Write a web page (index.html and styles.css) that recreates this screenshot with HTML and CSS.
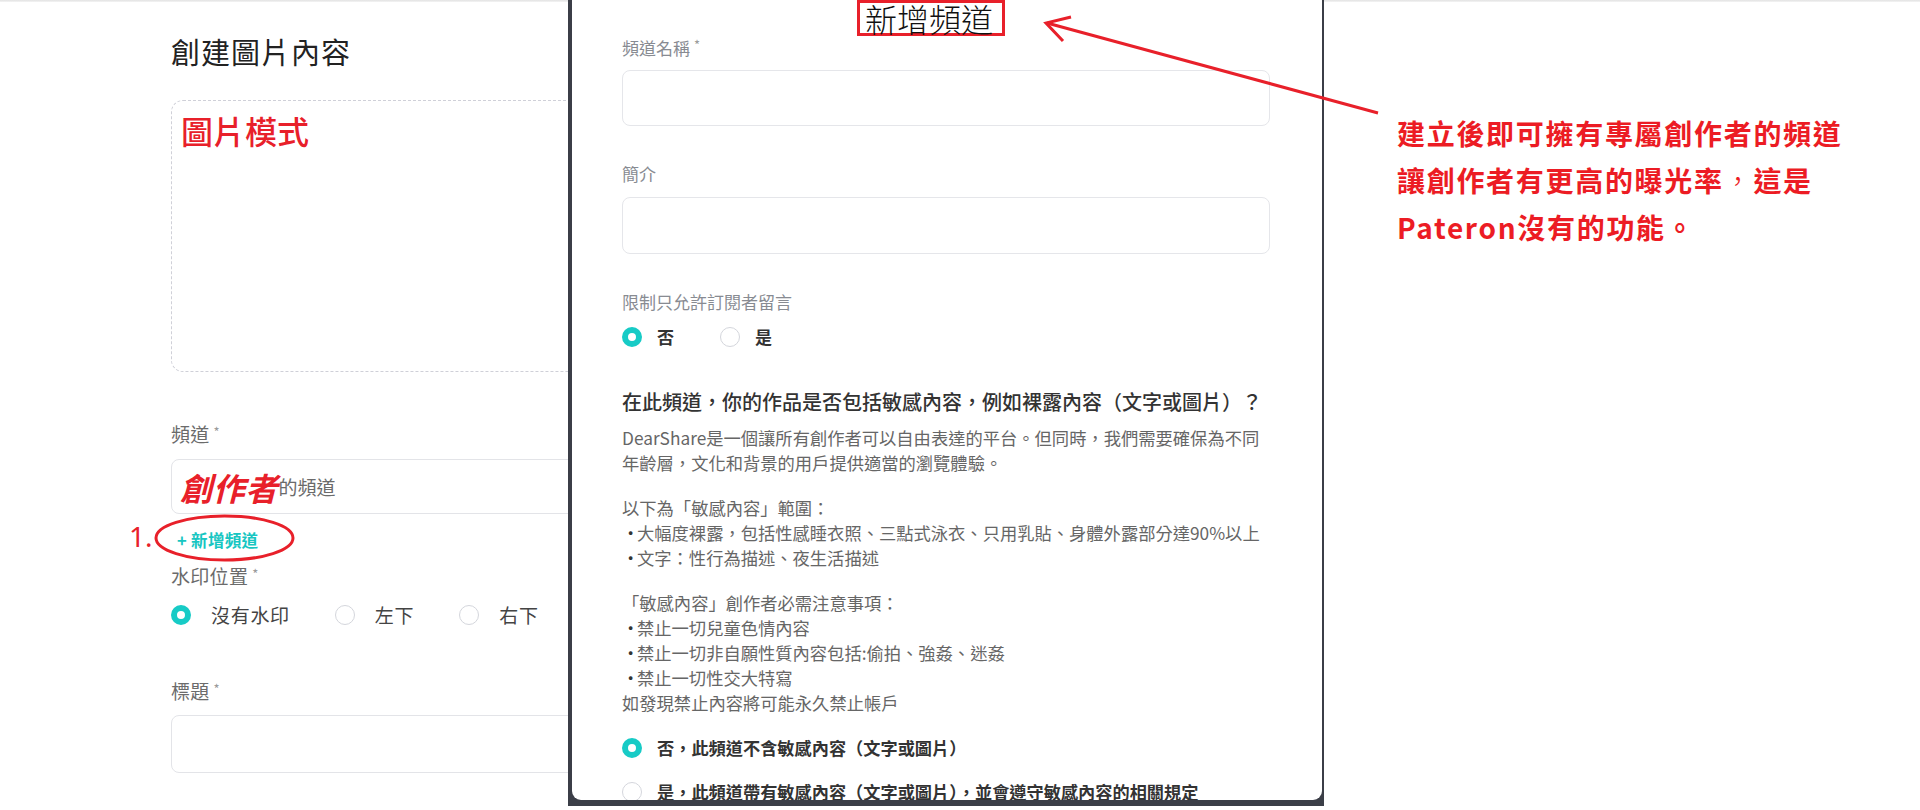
FILE: index.html
```html
<!DOCTYPE html>
<html lang="zh-Hant">
<head>
<meta charset="utf-8">
<title>創建圖片內容</title>
<link rel="stylesheet" href="styles.css">
</head>
<body>
<div class="topline"></div>

<main class="form">
  <h1 class="form-title">創建圖片內容</h1>
  <div class="upload"><span class="upload-note">圖片模式</span></div>

  <div class="label label-channel">頻道<span class="req">*</span></div>
  <div class="input input-channel"><span class="creator">創作者</span><span class="channel-suffix">的頻道</span></div>
  <a class="add-channel">+ 新增頻道</a>

  <div class="label label-watermark">水印位置<span class="req">*</span></div>
  <div class="radios radios-left">
    <label class="radio-item"><span class="radio on"></span><span class="radio-text">沒有水印</span></label>
    <label class="radio-item"><span class="radio"></span><span class="radio-text">左下</span></label>
    <label class="radio-item"><span class="radio"></span><span class="radio-text">右下</span></label>
  </div>

  <div class="label label-title">標題<span class="req">*</span></div>
  <div class="input input-title"></div>
</main>

<section class="modal">
  <div class="modal-body">
    <div class="modal-header"><span class="modal-title">新增頻道</span></div>

    <div class="m-label m-label-name">頻道名稱<span class="req">*</span></div>
    <div class="m-input"></div>

    <div class="m-label m-label-intro">簡介</div>
    <div class="m-input m-input-intro"></div>

    <div class="m-label m-label-limit">限制只允許訂閱者留言</div>
    <div class="radios radios-modal">
      <label class="radio-item"><span class="radio on"></span><span class="radio-text strong">否</span></label>
      <label class="radio-item"><span class="radio"></span><span class="radio-text strong">是</span></label>
    </div>

    <h2 class="m-heading">在此頻道，你的作品是否包括敏感內容，例如裸露內容（文字或圖片）？</h2>
    <p class="m-para">DearShare是一個讓所有創作者可以自由表達的平台。但同時，我們需要確保為不同<br>年齡層，文化和背景的用戶提供適當的瀏覽體驗。</p>
    <div class="m-block">
      <p>以下為「敏感內容」範圍：</p>
      <ul>
        <li>大幅度裸露，包括性感睡衣照、三點式泳衣、只用乳貼、身體外露部分達90%以上</li>
        <li>文字：性行為描述、夜生活描述</li>
      </ul>
    </div>
    <div class="m-block">
      <p>「敏感內容」創作者必需注意事項：</p>
      <ul>
        <li>禁止一切兒童色情內容</li>
        <li>禁止一切非自願性質內容包括:偷拍、強姦、迷姦</li>
        <li>禁止一切性交大特寫</li>
      </ul>
      <p>如發現禁止內容將可能永久禁止帳戶</p>
    </div>

    <div class="choice choice-first"><span class="radio on"></span><span class="choice-text">否，此頻道不含敏感內容（文字或圖片）</span></div>
    <div class="choice choice-second"><span class="radio"></span><span class="choice-text">是，此頻道帶有敏感內容（文字或圖片），並會遵守敏感內容的相關規定</span></div>
  </div>
</section>

<svg class="annotations" width="1920" height="810" viewBox="0 0 1920 810" aria-hidden="true">
  <ellipse cx="224.5" cy="538" rx="68.5" ry="22" fill="none" stroke="#e8202a" stroke-width="3"/>
  <line x1="1378" y1="113" x2="1047" y2="23" stroke="#e8202a" stroke-width="3"/>
  <polyline points="1071,17 1046,23 1063,41" fill="none" stroke="#e8202a" stroke-width="3"/>
</svg>

<div class="step-no">1.</div>

<div class="note">
  <p>建立後即可擁有專屬創作者的頻道</p>
  <p>讓創作者有更高的曝光率<span class="note-comma">，</span>這是</p>
  <p>Pateron沒有的功能。</p>
</div>
</body>
</html>
```

FILE: styles.css
```css
* { box-sizing: border-box; margin: 0; padding: 0; }

html, body {
  width: 1920px;
  height: 810px;
  overflow: hidden;
  background: #ffffff;
}

body {
  position: relative;
  font-family: "Noto Sans CJK TC", "Noto Sans", sans-serif;
  color: #333;
}

.topline {
  position: absolute;
  left: 0;
  top: 0;
  width: 1920px;
  height: 2px;
  background: linear-gradient(#e2e2e2, #f4f4f4);
  z-index: 1;
}

/* ---------- left form ---------- */
.form {
  width: 640px;
  padding-left: 171px;
  display: flex;
  flex-direction: column;
  align-items: flex-start;
}

.form-title {
  margin-top: 31px;
  font-size: 29px;
  line-height: 40px;
  font-weight: 400;
  color: #222;
  letter-spacing: 1px;
}

.upload {
  margin-top: 29px;
  width: 469px;
  height: 272px;
  border: 1px dashed #cfd0d8;
  border-radius: 12px;
  padding: 10px 9px;
}

.upload-note {
  font-size: 32px;
  line-height: 38px;
  font-weight: 500;
  color: #e8202a;
}

.label {
  font-size: 19px;
  line-height: 26px;
  color: #6b6b6b;
  letter-spacing: 0.3px;
}

.req {
  position: relative;
  top: -5px;
  font-size: 13px;
  line-height: 0;
  color: #9a9a9a;
  margin-left: 4px;
}

.label-channel { margin-top: 49px; }
.label-watermark { margin-top: 12px; }
.label-title { margin-top: 50px; }

.input {
  width: 469px;
  border: 1px solid #e3e4e8;
  border-radius: 8px;
}

.input-channel {
  margin-top: 12px;
  height: 55px;
  padding-left: 8px;
  display: flex;
  align-items: center;
}

.creator {
  font-size: 32px;
  line-height: 40px;
  font-weight: 700;
  font-style: italic;
  color: #e8202a;
  letter-spacing: 0.8px;
}

.channel-suffix {
  font-size: 19px;
  color: #6b6b6b;
}

.input-title {
  margin-top: 11px;
  height: 58px;
}

.add-channel {
  margin-top: 15px;
  padding-left: 6px;
  font-size: 16.5px;
  line-height: 22px;
  font-weight: 600;
  color: #17c6c2;
  letter-spacing: 0.3px;
}

.radios {
  display: flex;
  align-items: center;
}

.radios-left {
  margin-top: 13px;
  height: 26px;
  gap: 45px;
}

.radio-item {
  display: flex;
  align-items: center;
}

.radio {
  flex: none;
  width: 20px;
  height: 20px;
  border-radius: 50%;
  border: 1px solid #d4d6dc;
  background: #fff;
}

.radio.on {
  border: 6px solid #17cbc6;
}

.radios-left .radio-text {
  margin-left: 20px;
  font-size: 19px;
  line-height: 26px;
  color: #444;
  letter-spacing: 0.7px;
}

/* ---------- modal ---------- */
.modal {
  position: absolute;
  left: 568px;
  top: 0;
  width: 756px;
  height: 806px;
  background: #3b3e47;
  padding: 0 2px 6px 4px;
  z-index: 2;
}

.modal-body {
  height: 100%;
  background: #fff;
  border-radius: 0 0 9px 9px;
  overflow: hidden;
  padding: 0 52px 0 50px;
}

.modal-header {
  display: flex;
  height: 36px;
  margin-left: -50px;
  padding-left: 285px;
}

.modal-title {
  display: block;
  height: 36px;
  border: 3px solid #e8202a;
  padding: 0 9px 0 5px;
  font-size: 32px;
  line-height: 30px;
  font-weight: 300;
  color: #111;
}

.m-label {
  font-size: 17px;
  line-height: 24px;
  color: #888b92;
}

.m-label-intro { margin-top: 36px; }
.m-label-limit { margin-top: 36px; }

.m-input {
  margin-top: 10px;
  height: 56px;
  border: 1px solid #e5e6ea;
  border-radius: 8px;
}

.m-input-intro {
  margin-top: 11px;
  height: 57px;
}

.radios-modal {
  margin-top: 11px;
  height: 24px;
  gap: 46px;
}

.radios-modal .radio-text {
  margin-left: 15px;
}

.strong {
  font-size: 17px;
  line-height: 24px;
  font-weight: 600;
  color: #333;
}

.m-heading {
  margin-top: 39px;
  font-size: 20px;
  line-height: 28px;
  font-weight: 500;
  color: #333;
  white-space: nowrap;
}

.m-para,
.m-block {
  font-size: 17.3px;
  line-height: 25px;
  color: #666;
  white-space: nowrap;
}

.m-para { margin-top: 9px; }
.m-block { margin-top: 20px; }

.m-block ul { list-style: none; }

.m-block li::before {
  content: "•";
  display: inline-block;
  width: 15px;
  color: #333;
}

.choice {
  display: flex;
  align-items: center;
  height: 24px;
}

.choice-first { margin-top: 21px; }
.choice-second { margin-top: 20px; }

.choice-text {
  margin-left: 15px;
  font-size: 17.2px;
  line-height: 24px;
  font-weight: 600;
  color: #333;
  white-space: nowrap;
}

/* ---------- annotations ---------- */
.annotations {
  position: absolute;
  left: 0;
  top: 0;
  pointer-events: none;
  z-index: 4;
}

.step-no {
  position: absolute;
  left: 129px;
  top: 521px;
  font-family: "Noto Sans", sans-serif;
  font-size: 28px;
  line-height: 30px;
  color: #e8202a;
  z-index: 4;
}

.note {
  position: absolute;
  left: 1397px;
  top: 110px;
  font-size: 28px;
  line-height: 47px;
  font-weight: 700;
  letter-spacing: 1.7px;
  color: #ec1c24;
  z-index: 4;
}

.note-comma {
  font-weight: 300;
}
```
